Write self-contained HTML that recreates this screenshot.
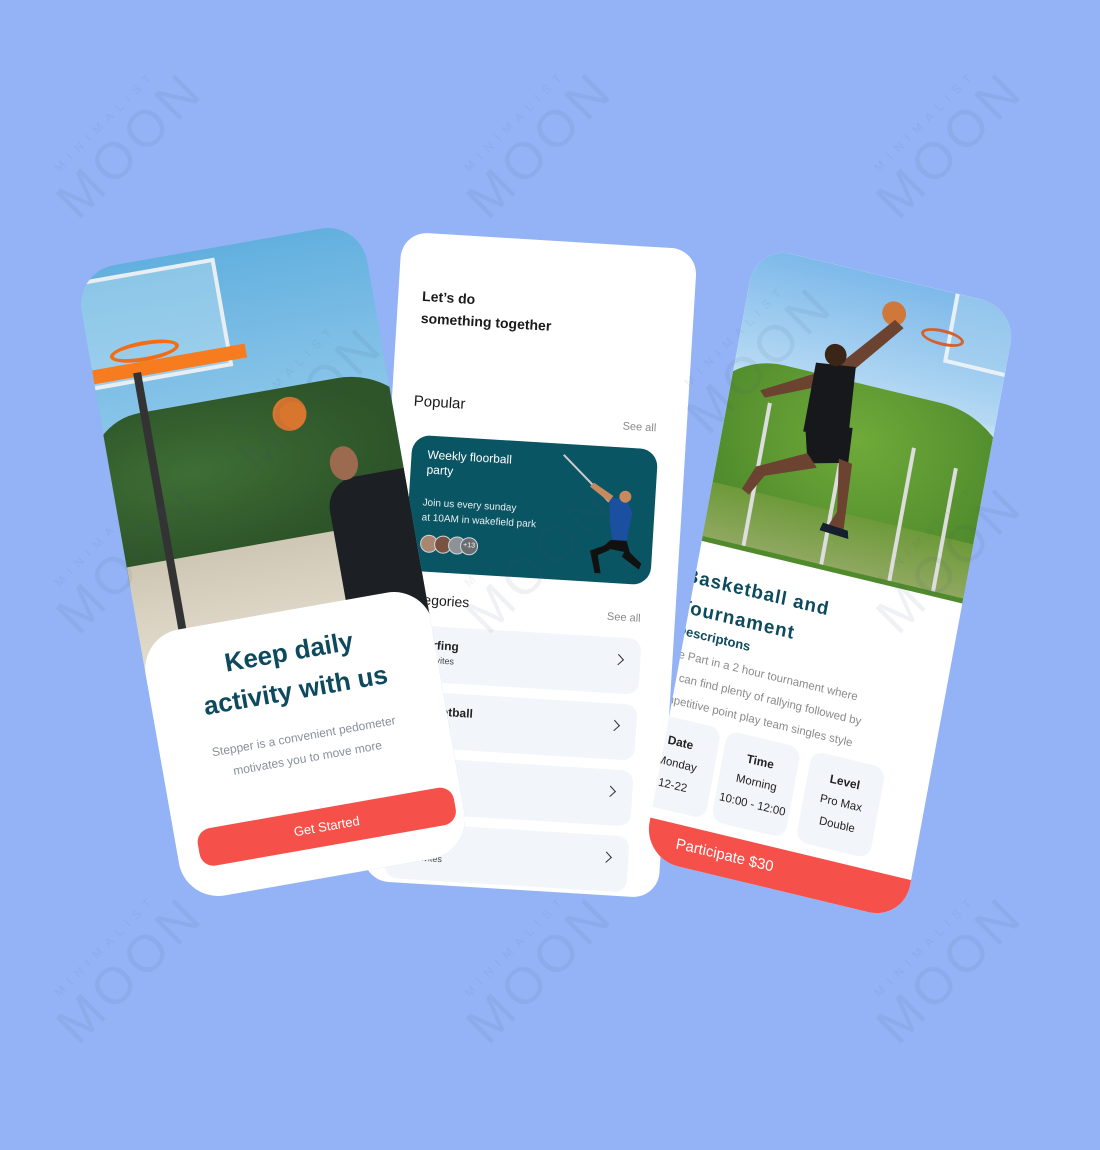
<!DOCTYPE html>
<html><head><meta charset="utf-8">
<style>
*{margin:0;padding:0;box-sizing:border-box}
body{width:1100px;height:1150px;background:#93b3f6;overflow:hidden;position:relative;font-family:"Liberation Sans",sans-serif}
.card{position:absolute;overflow:hidden;background:#fff}
.abs{position:absolute}
.wm{position:absolute;width:240px;height:140px;transform:translate(-50%,-50%) rotate(-45deg);color:rgba(60,80,120,0.08);text-align:center;pointer-events:none;z-index:10}
.wm .a{font-size:12px;letter-spacing:7px;font-weight:400}
.wm .b{font-size:52px;letter-spacing:5px;font-weight:400;line-height:56px}
.item{position:absolute;left:22px;width:242px;height:56px;background:#f2f6fa;border-radius:12px}
.item .t{position:absolute;left:18px;top:12px;font-size:12px;font-weight:bold;color:#222}
.item .s{position:absolute;left:18px;top:29px;font-size:9px;color:#444}
.item .c{position:absolute;right:18px;top:18px;width:8px;height:8px;border-right:1.6px solid #333;border-top:1.6px solid #333;transform:rotate(45deg)}
.box{position:absolute;top:478px;width:76px;height:92px;background:#f2f6fa;border-radius:12px;text-align:center;font-size:11.5px;color:#222;line-height:22px;padding-top:12px}
.box b{display:block;font-size:12px}
</style></head><body>

<!-- middle card -->
<div class="card" style="left:382px;top:240px;width:296px;height:650px;transform:rotate(3.5deg);border-radius:26px;z-index:1">
  <div class="abs" style="left:24px;top:52px;font-size:14px;font-weight:bold;color:#1a1a1a;line-height:22px">Let’s do<br>something together</div>
  <div class="abs" style="left:22px;top:160px;font-size:15px;color:#1a1a1a">Popular</div>
  <div class="abs" style="left:232px;top:175px;font-size:11px;color:#888">See all</div>
  <div class="abs" style="left:23px;top:202px;width:246px;height:136px;background:#0a5563;border-radius:18px;overflow:hidden">
    <div class="abs" style="left:16px;top:12px;font-size:12px;color:#fff;line-height:15px">Weekly floorball<br>party</div>
    <div class="abs" style="left:14px;top:60px;font-size:10px;color:#e6eef0;line-height:15px">Join us every sunday<br>at 10AM in wakefield park</div>
    <div class="abs" style="left:14px;top:99px;width:18px;height:18px;border-radius:50%;background:#a98670;border:1.5px solid #cfd8da"></div>
    <div class="abs" style="left:28px;top:99px;width:18px;height:18px;border-radius:50%;background:#7a5244;border:1.5px solid #cfd8da"></div>
    <div class="abs" style="left:42px;top:99px;width:18px;height:18px;border-radius:50%;background:#8c9297;border:1.5px solid #cfd8da"></div>
    <div class="abs" style="left:54px;top:99px;width:18px;height:18px;border-radius:50%;background:#6a6e70;border:1.5px solid #cfd8da;font-size:7px;color:#fff;text-align:center;line-height:15px">+13</div>
    <svg class="abs" style="left:140px;top:5px" width="100" height="130" viewBox="0 0 100 130">
      <line x1="12" y1="6" x2="60" y2="50" stroke="#ccc" stroke-width="2"/>
      <path d="M60 45 L78 48 L84 60 L80 88 L66 90 L62 70 Z" fill="#1b4fa0"/>
      <circle cx="76" cy="44" r="6" fill="#c9895f"/>
      <path d="M64 88 L80 88 L84 100 L56 96 Z" fill="#111"/>
      <path d="M58 94 L44 100 L50 122 L56 122 L52 104 L64 98Z" fill="#111"/>
      <path d="M80 96 L96 110 L94 116 L76 104Z" fill="#111"/>
      <path d="M60 50 L40 36 L44 32 L64 44Z" fill="#c9895f"/>
    </svg>
  </div>
  <div class="abs" style="left:22px;top:358px;font-size:14px;color:#1a1a1a">Categories</div>
  <div class="abs" style="left:228px;top:366px;font-size:11px;color:#888">See all</div>
  <div class="item" style="top:392px"><div class="t">Surfing</div><div class="s">10 invites</div><div class="c"></div></div>
  <div class="item" style="top:458px"><div class="t">Basketball</div><div class="s">12 invites</div><div class="c"></div></div>
  <div class="item" style="top:524px"><div class="t">Tennis</div><div class="s">8 invites</div><div class="c"></div></div>
  <div class="item" style="top:590px"><div class="t">Football</div><div class="s">14 invites</div><div class="c"></div></div>
</div>

<!-- left card -->
<div class="card" style="left:128px;top:242px;width:290px;height:640px;transform:rotate(-10deg);border-radius:40px;z-index:2;background:#74b8e0">
  <div class="abs" style="left:0;top:0;width:290px;height:420px;background:linear-gradient(#62b0df,#9fd0ee 60%,#b8dcef)"></div>
  <div class="abs" style="left:-20px;top:150px;width:340px;height:170px;background:radial-gradient(ellipse at 30% 40%,#3f6e35,#2d5529 60%);border-radius:60px 80px 0 0"></div>
  <div class="abs" style="left:0;top:300px;width:290px;height:120px;background:linear-gradient(#cfc7b4,#e6e0d2)"></div>
  <div class="abs" style="left:-10px;top:10px;width:150px;height:110px;border:4px solid #e9eef2;background:rgba(200,230,245,0.4)"></div>
  <div class="abs" style="left:0;top:100px;width:155px;height:14px;background:#f77b1f"></div>
  <div class="abs" style="left:20px;top:80px;width:70px;height:20px;border:4px solid #f26d14;border-radius:50%"></div>
  <div class="abs" style="left:40px;top:110px;width:8px;height:300px;background:#333"></div>
  <div class="abs" style="left:170px;top:160px;width:34px;height:34px;border-radius:50%;background:#d9762e"></div>
  <div class="abs" style="left:210px;top:250px;width:90px;height:150px;background:#1c1f24;border-radius:30px 10px 0 0"></div>
  <div class="abs" style="left:218px;top:218px;width:28px;height:34px;border-radius:50%;background:#9c6a4e"></div>
  <div class="abs" style="left:0;top:370px;width:292px;height:280px;background:#fff;border-radius:40px 40px 0 0"></div>
  <div class="abs" style="left:0;top:392px;width:290px;text-align:center;font-size:26px;font-weight:bold;color:#0d4a5e;line-height:39px">Keep daily<br>activity with us</div>
  <div class="abs" style="left:0;top:486px;width:290px;text-align:center;font-size:12px;color:#8a8f98;line-height:22px">Stepper is a convenient pedometer<br>motivates you to move more</div>
  <div class="abs" style="left:22px;top:571px;width:260px;height:38px;background:#f5504a;border-radius:14px;color:#fff;text-align:center;line-height:38px;font-size:13px">Get Started</div>
</div>

<!-- right card -->
<div class="card" style="left:696px;top:272px;width:268px;height:622px;transform:rotate(13.5deg) skewX(3deg);border-radius:36px;z-index:3">
  <div class="abs" style="left:0;top:0;width:268px;height:295px;background:linear-gradient(#7db9ea,#b5d9f3 40%,#cfe7f3 45%)"></div>
  <div class="abs" style="left:-30px;top:110px;width:330px;height:190px;background:radial-gradient(ellipse at 50% 30%,#6faa3a,#4f8a2c 70%);border-radius:80px 90px 0 0"></div>
  <div class="abs" style="left:0;top:240px;width:268px;height:55px;background:linear-gradient(#6d9a3a,#8fa860)"></div>
  <div class="abs" style="left:40px;top:150px;width:4px;height:145px;background:#ddd"></div>
  <div class="abs" style="left:120px;top:170px;width:4px;height:125px;background:#ddd"></div>
  <div class="abs" style="left:190px;top:160px;width:4px;height:135px;background:#ddd"></div>
  <div class="abs" style="left:235px;top:170px;width:4px;height:125px;background:#ddd"></div>
  <div class="abs" style="left:205px;top:-10px;width:70px;height:80px;border:4px solid #e8f1f8;background:rgba(170,210,240,.5)"></div>
  <div class="abs" style="left:178px;top:38px;width:44px;height:16px;border:3px solid #d4612a;border-radius:50%"></div>
  <div class="abs" style="left:136px;top:22px;width:24px;height:24px;border-radius:50%;background:#d0773a"></div>
  <svg class="abs" style="left:10px;top:40px" width="180" height="230" viewBox="0 0 180 230">
    <path d="M140 0 L90 60 L20 100 L26 106 L96 74 L150 6Z" fill="#6b4330"/>
    <path d="M70 60 L110 55 L115 120 L70 130Z" fill="#16181b"/>
    <circle cx="88" cy="48" r="11" fill="#3b2518"/>
    <path d="M70 120 L118 115 L120 150 L80 160Z" fill="#16181b"/>
    <path d="M78 150 L30 175 L20 200 L28 204 L40 182 L90 162Z" fill="#6b4330"/>
    <path d="M110 148 L118 200 L110 220 L128 222 L124 150Z" fill="#6b4330"/>
    <path d="M106 214 L132 216 L134 224 L104 222Z" fill="#15202e"/>
  </svg>
  <div class="abs" style="left:-10px;top:322px;font-size:19px;font-weight:bold;color:#0d4a5e;line-height:31px;letter-spacing:1px">Basketball and<br>Tournament</div>
  <div class="abs" style="left:-8px;top:384px;font-size:13px;font-weight:bold;color:#0d4a5e">Descriptons</div>
  <div class="abs" style="left:-20px;top:405px;font-size:11.5px;color:#8a8a8a;line-height:23px;white-space:nowrap">Take Part in a 2 hour tournament where<br>You can find plenty of rallying followed by<br>competitive point play team singles style</div>
  <div class="box" style="left:-22px"><b>Date</b>Monday<br>12-22</div>
  <div class="box" style="left:60px"><b>Time</b>Morning<br>10:00 - 12:00</div>
  <div class="box" style="left:147px"><b>Level</b>Pro Max<br>Double</div>
  <div class="abs" style="left:-30px;top:581px;width:310px;height:45px;background:#f5504a"></div>
  <div class="abs" style="left:30px;top:592px;font-size:15px;color:#fff">Participate $30</div>
</div>

<div class="wm" style="left:150px;top:165px"><div class="a">MINIMALIST</div><div class="b">MOON</div></div>
<div class="wm" style="left:560px;top:165px"><div class="a">MINIMALIST</div><div class="b">MOON</div></div>
<div class="wm" style="left:970px;top:165px"><div class="a">MINIMALIST</div><div class="b">MOON</div></div>
<div class="wm" style="left:150px;top:580px"><div class="a">MINIMALIST</div><div class="b">MOON</div></div>
<div class="wm" style="left:560px;top:580px"><div class="a">MINIMALIST</div><div class="b">MOON</div></div>
<div class="wm" style="left:970px;top:580px"><div class="a">MINIMALIST</div><div class="b">MOON</div></div>
<div class="wm" style="left:150px;top:990px"><div class="a">MINIMALIST</div><div class="b">MOON</div></div>
<div class="wm" style="left:560px;top:990px"><div class="a">MINIMALIST</div><div class="b">MOON</div></div>
<div class="wm" style="left:970px;top:990px"><div class="a">MINIMALIST</div><div class="b">MOON</div></div>
<div class="wm" style="left:330px;top:420px"><div class="a">MINIMALIST</div><div class="b">MOON</div></div>
<div class="wm" style="left:780px;top:380px"><div class="a">MINIMALIST</div><div class="b">MOON</div></div>
</body></html>
